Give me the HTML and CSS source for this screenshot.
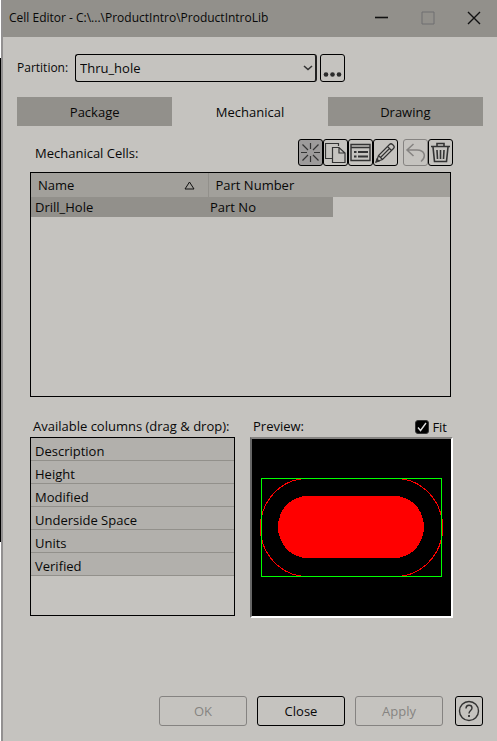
FILE: index.html
```html
<!DOCTYPE html>
<html lang="en">
<head>
<meta charset="utf-8">
<title>Cell Editor</title>
<link rel="stylesheet" href="styles.css">
</head>
<body>
<div class="window">
  <header class="titlebar">
    <h1 class="title">Cell Editor - C:\...\ProductIntro\ProductIntroLib</h1>
    <button class="win-btn" aria-label="Minimize"><svg width="14" height="14" viewBox="0 0 14 14"><path d="M0 6.500H13" stroke="#111" stroke-width="1.6"/></svg></button>
    <button class="win-btn" aria-label="Maximize" disabled><svg width="14" height="14" viewBox="0 0 14 14"><path d="M1 1h12v12h-12z" fill="none" stroke="#6f6f70"/></svg></button>
    <button class="win-btn" aria-label="Close window"><svg width="14" height="14" viewBox="0 0 14 14"><path d="M1 1L13 13M13 1L1 13" stroke="#111" stroke-width="1.4"/></svg></button>
  </header>

  <main class="content">
    <div class="partition">
      <label for="partition">Partition:</label>
      <div class="select-wrap">
        <select id="partition" class="select"><option>Thru_hole</option></select>
        <svg class="chevron" width="10" height="8" viewBox="0 0 10 8"><path d="M1 2L5 5.500L9 2" fill="none" stroke="#333" stroke-width="1.6"/></svg>
      </div>
      <button class="more" aria-label="Browse partitions"><svg width="19" height="5" viewBox="0 0 19 5" fill="#2b2b2b"><circle cx="3" cy="2.500" r="2.300"/><circle cx="9.500" cy="2.500" r="2.300"/><circle cx="16" cy="2.500" r="2.300"/></svg></button>
    </div>

    <div class="tabs" role="tablist">
      <button class="tab" role="tab" aria-selected="false">Package</button>
      <button class="tab active" role="tab" aria-selected="true">Mechanical</button>
      <button class="tab" role="tab" aria-selected="false">Drawing</button>
    </div>

    <section class="panel">
      <div class="cells-head">
        <h2 class="label">Mechanical Cells:</h2>
        <div class="toolbar">
          <button class="tool new" aria-label="New cell"><svg width="21" height="21" viewBox="0 0 21 21"><path d="M10.500 1v6M10.500 14v6M1 10.500h6M14 10.500h6M2.500 2.500L8 8M13 13l5.500 5.500M18.500 2.500L13 8M8 13l-5.500 5.500"/></svg></button>
          <button class="tool" aria-label="Copy cell"><svg width="21" height="21" viewBox="0 0 21 21"><path d="M7 16.500H.5V1.500H13.500V4M7.500 5.500H14L20 11V20.500H7.500zM14 5.500V11H20"/></svg></button>
          <button class="tool" aria-label="Cell properties"><svg width="21" height="21" viewBox="0 0 21 21"><path d="M1 2.500H20V18.500H1zM1 5.500H20" stroke-width="1.4"/><path d="M8 10H18M8 14.500H18M4 10h2.500M4 14.500h2.500" stroke-width="2"/></svg></button>
          <button class="tool" aria-label="Edit graphics"><svg width="21" height="21" viewBox="0 0 21 21"><path d="M1.500 19.500L3.500 13.500L14.500 2.500Q16 1 17.500 2.500L18.500 3.500Q20 5 18.500 6.500L7.500 17.500zM3.500 13.500L7.500 17.500M12.500 4.500L16.500 8.500M5.500 15.500L14.500 6.500" stroke-width="1.2"/><path d="M1 20l1-3 2 2z" fill="#333"/></svg></button>
          <button class="tool undo" aria-label="Undo" disabled><svg width="21" height="21" viewBox="0 0 21 21"><path d="M8.500 2L2 8L8.500 14M2 8H12C20 8 21.500 15 16 19.500" stroke-width="1.5"/></svg></button>
          <button class="tool" aria-label="Delete cell"><svg width="21" height="21" viewBox="0 0 21 21"><path d="M1 4.500H20M7 4V1.500H14V4M3 5L4.500 19.500H16.500L18 5M7 8L7.500 17M10.500 8V17M14 8L13.500 17" stroke-width="1.6"/></svg></button>
        </div>
      </div>

      <div class="cells">
        <table class="grid">
          <colgroup><col class="col-name"><col class="col-part"><col></colgroup>
          <thead>
            <tr>
              <th scope="col"><span class="sort">Name <svg width="11" height="9" viewBox="0 0 11 9"><path d="M5.500 1L10 8H1z" fill="none" stroke="#111"/></svg></span></th>
              <th scope="col" colspan="2">Part Number</th>
            </tr>
          </thead>
          <tbody>
            <tr><td class="selected">Drill_Hole</td><td class="selected">Part No</td><td></td></tr>
          </tbody>
        </table>
      </div>

      <div class="lower">
        <div class="available">
          <h2 class="label lower-label">Available columns (drag &amp; drop):</h2>
          <ul class="columns">
            <li>Description</li>
            <li>Height</li>
            <li>Modified</li>
            <li>Underside Space</li>
            <li>Units</li>
            <li>Verified</li>
          </ul>
        </div>
        <div class="preview">
          <div class="preview-head">
            <h2 class="label lower-label">Preview:</h2>
            <label class="fit"><input type="checkbox" class="check" checked>Fit</label>
          </div>
          <div class="canvas">
            <svg class="drawing" viewBox="0 0 199 177" role="img" aria-label="Slotted hole preview" shape-rendering="crispEdges">
              <rect x="8.500" y="39.500" width="182" height="98" rx="47" ry="49" fill="none" stroke="#f00"/>
              <rect x="9.500" y="39.500" width="180" height="98" fill="none" stroke="#0f0"/>
              <path d="M8.500 80v17M190.500 80v17" stroke="#f00"/>
              <rect x="26" y="57" width="146" height="62" rx="29" ry="31" fill="#f00"/>
            </svg>
          </div>
        </div>
      </div>
    </section>

    <footer class="actions">
      <button class="btn" disabled>OK</button>
      <button class="btn">Close</button>
      <button class="btn" disabled>Apply</button>
      <button class="help" aria-label="Help"><svg width="22" height="22" viewBox="0 0 22 22" fill="none" stroke="#333" stroke-width="1.4"><circle cx="11" cy="11" r="9.500"/><path d="M8 8.500C8 4 14 4.500 14 8C14 10.500 11 10.500 11 13.500"/><path d="M11 15v2" stroke-width="1.8"/></svg></button>
    </footer>
  </main>
</div>
</body>
</html>
```
FILE: styles.css
```css
* { box-sizing: border-box; }

body {
  margin: 0;
  padding-left: 1px;
  background: linear-gradient(#fff 58px, #000 58px, #000 542px, #fff 542px);
  color: #080808;
  font: 13px/18px "Open Sans", "Noto Sans", sans-serif;
}

button, select, input { margin: 0; font: inherit; color: inherit; }

button {
  display: flex;
  align-items: center;
  justify-content: center;
  padding: 0;
  border: 1px solid #000;
  border-radius: 3px;
  background: none;
}

h1, h2 { margin: 0; font-size: 13px; font-weight: 400; }

.window {
  display: flex;
  flex-direction: column;
  min-height: 100vh;
  border-left: 2px solid #929090;
  background: #c5c3bf;
}

.titlebar {
  display: flex;
  align-items: center;
  height: 37px;
  padding: 0 0 2px 6px;
  background: #92908b;
}

.title { flex: 1; font-size: 12px; white-space: nowrap; }

.win-btn { width: 46px; height: 34px; border: 0; }

.content {
  flex: 1;
  display: flex;
  flex-direction: column;
  padding: 17px 14px 15px;
}

.partition { display: flex; align-items: center; gap: 3px; }
.partition label { width: 55px; font-size: 12px; white-space: nowrap; }

.select-wrap { position: relative; width: 54%; max-width: 242px; flex: 1 0 auto; }

.select {
  display: block;
  width: 100%;
  height: 28px;
  padding: 0 20px 0 4px;
  appearance: none;
  border: 1px solid #000;
  border-right: 2px solid #222;
  border-radius: 3px;
  background: none;
}

.chevron { position: absolute; right: 4px; top: 10px; pointer-events: none; }

.more { width: 25px; height: 28px; align-items: flex-end; padding-bottom: 4px; }

.tabs { display: grid; grid-template-columns: repeat(3, 1fr); margin-top: 15px; }

.tab { height: 29px; border: 0; border-radius: 0; background: #92908b; }
.tab.active { background: none; }

.panel { padding: 13px 30px 0 13px; }

.cells-head { display: flex; justify-content: space-between; align-items: center; padding-left: 5px; }

.toolbar { display: flex; }

.tool { width: 25px; height: 27px; }
.tool svg { fill: none; stroke: #333; stroke-width: 1.2; }
.tool.new { background: #9d9b9b; }
.tool.undo { margin-left: 5px; border-color: #858381; }
.tool.undo svg { stroke: #858381; }

.cells {
  height: 225px;
  margin: 6px 2px 0 0;
  border: 1px solid #000;
}

.grid { width: 100%; border-collapse: collapse; table-layout: fixed; }
.col-name { width: 177px; }
.col-part { width: 125px; }

th {
  height: 24px;
  padding: 0 7px;
  background: #a2a09b;
  font-weight: 400;
  text-align: left;
}
th + th { border-left: 1px solid #92908b; }

.sort { display: flex; align-items: center; justify-content: space-between; padding-right: 6px; }

td { height: 20px; padding: 0 4px; }
td + td { padding-left: 2px; }
.selected { background: #92908b; }

.lower { display: flex; gap: 15px; margin-top: 19px; }
.available { flex: 205; min-width: 0; }
.preview { flex: 203; min-width: 0; }

.label { white-space: nowrap; }
.lower-label { padding: 1px 3px 2px; line-height: 18px; }

.columns {
  height: 179px;
  margin: 0;
  padding: 0;
  border: 1px solid #000;
  list-style: none;
}

.columns li {
  height: 23px;
  padding: 4px 4px 0;
  border-bottom: 1px solid #92908b;
  background: #b2b0ac;
}

.preview-head { display: flex; justify-content: space-between; }

.fit { display: flex; align-items: center; gap: 3px; padding-right: 6px; }

.check {
  width: 14px;
  height: 14px;
  appearance: none;
  border: 1px solid #333;
  border-radius: 3px;
  background: #000 url("data:image/svg+xml,%3Csvg xmlns='http://www.w3.org/2000/svg' viewBox='0 0 12 12'%3E%3Cpath d='M2 6.5L4.500 9.500L10 2' fill='none' stroke='%23ddd' stroke-width='1.4'/%3E%3C/svg%3E");
}

.canvas {
  border: 2px solid;
  border-color: #858381 #fff #fff #666;
  background: #000;
}

.drawing { display: block; width: 100%; }

.actions { display: flex; justify-content: flex-end; gap: 10px; margin-top: auto; }

.btn { width: 88px; height: 30px; }
.btn:disabled { border-color: #858381; color: #858381; }

.help { width: 28px; height: 30px; margin-left: 2px; }
```
